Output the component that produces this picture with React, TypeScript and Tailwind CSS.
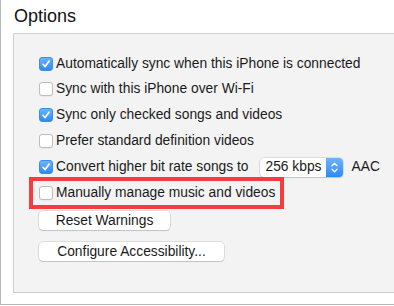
import React from "react";

function Check({ checked }: { checked?: boolean }) {
  if (checked) {
    return (
      <div className="w-[14px] h-[14px] rounded-[3px] bg-gradient-to-b from-[#6cb3fa] to-[#2a8af6] border border-[#3a8de8] flex items-center justify-center shrink-0">
        <svg width="10" height="10" viewBox="0 0 10 10">
          <path d="M2 5.3 L4.1 7.6 L8 2.2" stroke="white" strokeWidth="1.7" fill="none" strokeLinecap="round" strokeLinejoin="round" />
        </svg>
      </div>
    );
  }
  return <div className="w-[14px] h-[14px] rounded-[3px] bg-white border border-[#bdbdbd] shadow-[0_0.5px_0.5px_rgba(0,0,0,0.08)] shrink-0" />;
}

function Row({ checked, label, h = "h-[26px]", children }: { checked?: boolean; label: string; h?: string; children?: React.ReactNode }) {
  return (
    <div className={`flex items-center ${h}`}>
      <Check checked={checked} />
      <span className="ml-[3px] text-[13.8px] text-[#1a1a1a] leading-none">{label}</span>
      {children}
    </div>
  );
}

export default function App() {
  return (
    <div
      className="relative w-[394px] h-[306px] bg-white overflow-hidden"
      style={{ fontFamily: '"Liberation Sans", Arial, sans-serif' }}
    >
      <div className="w-[394px] h-[305px] border-l border-b border-[#b8b8b8] overflow-hidden">
        <div className="pl-[13px] pt-[4px] text-[18px] leading-[24px] text-[#111]">Options</div>
        <div className="ml-[12px] mt-[5px] w-[400px] h-[260px] bg-[#f3f3f3] border-l border-t border-b border-[#cfcfcf] pl-[25px] pt-[17px]">
          <Row checked label="Automatically sync when this iPhone is connected" h="h-[25px]" />
          <Row label="Sync with this iPhone over Wi-Fi" h="h-[25px]" />
          <Row checked label="Sync only checked songs and videos" h="h-[27px]" />
          <Row label="Prefer standard definition videos" h="h-[26px]" />
          <Row checked label="Convert higher bit rate songs to" h="h-[26px]">
            <div className="ml-[11px] w-[83px] h-[19px] bg-white rounded-[4px] shadow-[0_0_0_0.5px_rgba(0,0,0,0.18),0_1px_1px_rgba(0,0,0,0.12)] flex items-center overflow-hidden">
              <span className="flex-1 pl-[6px] text-[13.8px] leading-none text-[#1a1a1a]">256 kbps</span>
              <div className="w-[17px] h-full bg-gradient-to-b from-[#6cb3fa] to-[#2a8af6] flex items-center justify-center">
                <svg width="9" height="13" viewBox="0 0 9 13">
                  <path d="M2 4.8 L4.5 2.3 L7 4.8" stroke="white" strokeWidth="1.3" fill="none" strokeLinecap="round" strokeLinejoin="round" />
                  <path d="M2 8.2 L4.5 10.7 L7 8.2" stroke="white" strokeWidth="1.3" fill="none" strokeLinecap="round" strokeLinejoin="round" />
                </svg>
              </div>
            </div>
            <span className="ml-[9px] text-[13.8px] leading-none text-[#1a1a1a]">AAC</span>
          </Row>
          <Row label="Manually manage music and videos" h="h-[26px]" />
          <div className="mt-[5px] w-[131px] h-[19px] bg-white rounded-[4px] shadow-[0_0_0_0.5px_rgba(0,0,0,0.18),0_1px_1px_rgba(0,0,0,0.12)] flex items-center justify-center text-[13.8px] leading-none text-[#1a1a1a]">
            Reset Warnings
          </div>
          <div className="mt-[12px] w-[185px] h-[19px] bg-white rounded-[4px] shadow-[0_0_0_0.5px_rgba(0,0,0,0.18),0_1px_1px_rgba(0,0,0,0.12)] flex items-center justify-center text-[13.8px] leading-none text-[#1a1a1a]">
            Configure Accessibility...
          </div>
        </div>
      </div>
      <div className="absolute left-[29px] top-[177px] w-[255px] h-[32px] border-[4px] border-[#f63c3c]" />
    </div>
  );
}
